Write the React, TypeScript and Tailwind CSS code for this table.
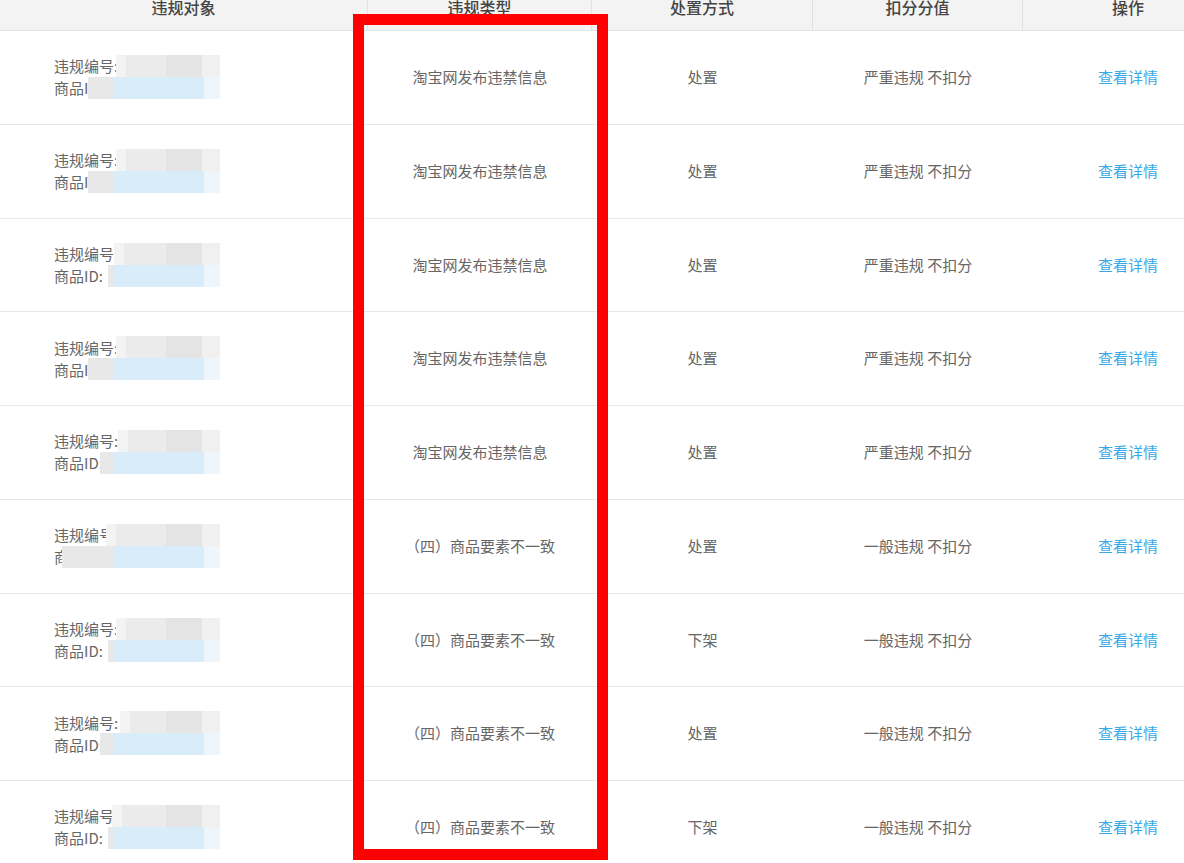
import React from "react";

const font = { fontFamily: '"Microsoft YaHei", "Noto Sans CJK SC", "Noto Sans", sans-serif' };

type Row = { type: string; action: string; score: string; top: number; bottom: number };

const rows: Row[] = [
    { type: "淘宝网发布违禁信息", action: "处置", score: "严重违规 不扣分", top: 116, bottom: 88 },
    { type: "淘宝网发布违禁信息", action: "处置", score: "严重违规 不扣分", top: 116, bottom: 88 },
    { type: "淘宝网发布违禁信息", action: "处置", score: "严重违规 不扣分", top: 114, bottom: 108 },
    { type: "淘宝网发布违禁信息", action: "处置", score: "严重违规 不扣分", top: 116, bottom: 88 },
    { type: "淘宝网发布违禁信息", action: "处置", score: "严重违规 不扣分", top: 118, bottom: 100 },
    { type: "（四）商品要素不一致", action: "处置", score: "一般违规 不扣分", top: 106, bottom: 62 },
    { type: "（四）商品要素不一致", action: "下架", score: "一般违规 不扣分", top: 116, bottom: 108 },
    { type: "（四）商品要素不一致", action: "处置", score: "一般违规 不扣分", top: 120, bottom: 100 },
    { type: "（四）商品要素不一致", action: "下架", score: "一般违规 不扣分", top: 112, bottom: 108 },
];

const cols = "grid grid-cols-[368px_224px_221px_210px_210px]";

export default function App() {
    return (
        <div className="relative w-[1184px] h-[863px] overflow-hidden bg-white" style={font}>
            {/* Header */}
            <div className={`${cols} h-[31px] bg-[#f3f3f3] border-b border-[#e4e4e4]`}>
                {["违规对象", "违规类型", "处置方式", "扣分分值", "操作"].map((h, i) => (
                    <div
                        key={h}
                        className={`flex justify-center text-[16px] font-medium text-[#444] leading-none -mt-[1px] ${i < 4 ? "border-r border-[#e2e2e2]" : ""}`}
                    >
                        {h}
                    </div>
                ))}
            </div>

            {/* Body */}
            {rows.map((r, i) => (
                <div key={i} className={`${cols} h-[93.75px] border-b border-[#e8e8e8] text-[15px] text-[#666]`}>
                    <div className="relative flex flex-col justify-center pl-[54px] leading-[22px]">
                        <span>违规编号:</span>
                        <span>商品ID:</span>
                        {/* blurred ids */}
                        <div className="absolute top-[24px] h-[22px] right-[148px] flex" style={{ left: r.top }}>
                            <div className="w-[10px] bg-[#f3f3f3]" />
                            <div className="flex-1 bg-[#ebebeb]" />
                            <div className="w-[36px] bg-[#e4e4e4]" />
                            <div className="w-[18px] bg-[#f0f0f0]" />
                        </div>
                        <div className="absolute top-[46px] h-[22px] right-[148px] flex" style={{ left: r.bottom }}>
                            <div className="bg-[#e8e8e8]" style={{ width: Math.max(0, 114 - r.bottom) }} />
                            <div className="w-[90px] bg-[#d8ecfa]" />
                            <div className="flex-1 bg-[#eef6fc]" />
                        </div>
                    </div>
                    <div className="flex items-center justify-center">{r.type}</div>
                    <div className="flex items-center justify-center">{r.action}</div>
                    <div className="flex items-center justify-center">{r.score}</div>
                    <div className="flex items-center justify-center text-[#38a8e8]">查看详情</div>
                </div>
            ))}

            {/* Red annotation box */}
            <div className="absolute left-[353px] top-[14px] w-[255px] h-[846px] border-[11px] border-[#ff0000]" />
        </div>
    );
}
